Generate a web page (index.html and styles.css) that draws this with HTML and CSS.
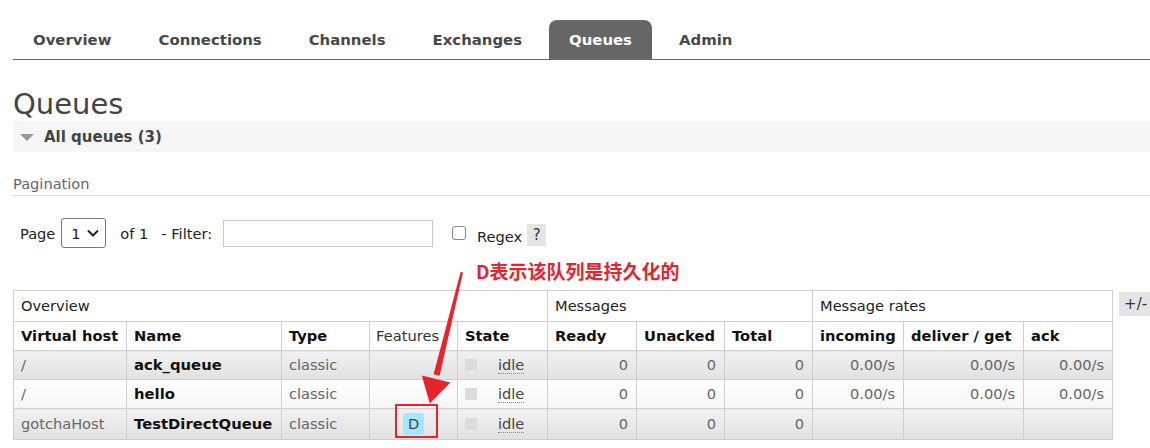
FILE: index.html
```html
<!DOCTYPE html>
<html lang="en">
<head>
<meta charset="utf-8">
<title>RabbitMQ Management - Queues</title>
<link rel="stylesheet" href="styles.css">
</head>
<body>
<div class="page">
  <nav class="menu">
    <a class="tab">Overview</a>
    <a class="tab">Connections</a>
    <a class="tab">Channels</a>
    <a class="tab">Exchanges</a>
    <a class="tab active">Queues</a>
    <a class="tab">Admin</a>
  </nav>

  <h1 class="title">Queues</h1>

  <div class="section-head"><span class="tri"></span><span class="section-label">All queues (3)</span></div>

  <h3 class="sub">Pagination</h3>

  <div class="pager">
    <span>Page</span>
    <span class="select"><span class="select-val">1</span><svg class="chev" width="12" height="8" viewBox="0 0 12 8"><polyline points="1,1.5 6,6.5 11,1.5" fill="none" stroke="#222" stroke-width="2"/></svg></span>
    <span class="of">of 1</span>
    <span class="filter-label">- Filter:</span>
    <span class="input"></span>
    <span class="check"></span>
    <span class="regex">Regex</span>
    <span class="help">?</span>
  </div>

  <div class="table-wrap">
    <table class="list">
      <colgroup>
        <col class="c113"><col class="c155"><col class="c88"><col class="c88"><col class="c90">
        <col class="c89"><col class="c88"><col class="c88">
        <col class="c91"><col class="c120"><col class="c89">
      </colgroup>
      <thead>
        <tr class="group">
          <th colspan="5">Overview</th>
          <th colspan="3">Messages</th>
          <th colspan="3">Message rates</th>
        </tr>
        <tr class="heads">
          <th>Virtual host</th>
          <th>Name</th>
          <th>Type</th>
          <th class="normal">Features</th>
          <th>State</th>
          <th>Ready</th>
          <th>Unacked</th>
          <th>Total</th>
          <th>incoming</th>
          <th>deliver / get</th>
          <th>ack</th>
        </tr>
      </thead>
      <tbody>
        <tr class="alt1">
          <td>/</td>
          <td class="name">ack_queue</td>
          <td>classic</td>
          <td class="feat"></td>
          <td><span class="sq"></span><abbr class="state">idle</abbr></td>
          <td class="num">0</td>
          <td class="num">0</td>
          <td class="num">0</td>
          <td class="num">0.00/s</td>
          <td class="num">0.00/s</td>
          <td class="num">0.00/s</td>
        </tr>
        <tr class="alt2">
          <td>/</td>
          <td class="name">hello</td>
          <td>classic</td>
          <td class="feat"></td>
          <td><span class="sq"></span><abbr class="state">idle</abbr></td>
          <td class="num">0</td>
          <td class="num">0</td>
          <td class="num">0</td>
          <td class="num">0.00/s</td>
          <td class="num">0.00/s</td>
          <td class="num">0.00/s</td>
        </tr>
        <tr class="alt1">
          <td>gotchaHost</td>
          <td class="name">TestDirectQueue</td>
          <td>classic</td>
          <td class="feat"><span class="badge">D</span></td>
          <td><span class="sq"></span><abbr class="state">idle</abbr></td>
          <td class="num">0</td>
          <td class="num">0</td>
          <td class="num">0</td>
          <td></td>
          <td></td>
          <td></td>
        </tr>
      </tbody>
    </table>
    <span class="toggle">+/-</span>
  </div>

  <div class="annot">
    <div class="note">D表示该队列是持久化的</div>
    <svg class="arrow" width="1150" height="448" viewBox="0 0 1150 448">
      <polygon points="460.6,272 463,272.5 439.6,375.8 433.6,374.3" fill="#e8232b"/>
      <polygon points="421.8,375.6 450.4,382.6 429.8,403.5" fill="#e8232b"/>
    </svg>
    <div class="mark"></div>
  </div>
</div>
</body>
</html>
```

FILE: styles.css
```css
* { box-sizing: border-box; }

body {
  margin: 0;
  background: #fff;
  color: #333;
  font-family: "DejaVu Sans", Verdana, sans-serif;
  font-size: 14.6px;
}

.page {
  position: relative;
  padding-left: 13px;
  height: 448px;
  overflow: hidden;
}

/* ---------- top menu ---------- */
.menu {
  display: flex;
  margin-top: 20px;
  height: 40px;
  border-bottom: 1px solid #666;
}
.tab {
  display: block;
  height: 39px;
  line-height: 39px;
  padding: 1px 20px 0;
  margin-right: 7px;
  font-size: 14.9px;
  font-weight: bold;
  color: #484848;
  border-radius: 8px 8px 0 0;
}
.tab.active {
  background: #666;
  color: #fff;
}

/* ---------- headings ---------- */
.title {
  margin: 27px 0 0;
  font-size: 29px;
  line-height: 34px;
  font-weight: normal;
  color: #444;
}

.section-head {
  display: flex;
  align-items: center;
  height: 31px;
  padding-left: 7px;
  background: #f6f6f6;
}
.tri {
  width: 0;
  height: 0;
  border-left: 7.5px solid transparent;
  border-right: 7.5px solid transparent;
  border-top: 7px solid #9a9a9a;
  margin-right: 10px;
  margin-top: 1px;
}
.section-label {
  font-size: 15px;
  font-weight: bold;
  color: #444;
}

.sub {
  margin: 23px 0 0;
  font-size: 14.6px;
  line-height: 18px;
  font-weight: normal;
  color: #666;
  padding-bottom: 2px;
  border-bottom: 1px solid #ddd;
}

/* ---------- pagination ---------- */
.pager {
  display: flex;
  align-items: center;
  height: 30px;
  margin-top: 22px;
  padding-left: 7px;
  color: #222;
}
.select {
  display: flex;
  align-items: center;
  justify-content: space-between;
  width: 45px;
  height: 30px;
  margin-left: 6px;
  padding: 0 6px 0 9px;
  border: 1px solid #767676;
  border-radius: 3px;
  background: #fff;
}
.chev { display: block; }
.of { margin-left: 14px; }
.filter-label { margin-left: 13px; }
.input {
  width: 210px;
  height: 27px;
  margin-left: 11px;
  border: 1px solid #c8c8c8;
  background: #fff;
}
.check {
  width: 14px;
  height: 14px;
  margin-left: 19px;
  border: 1px solid #858585;
  border-radius: 3px;
  background: #fff;
}
.regex {
  margin-left: 11px;
  margin-top: 6px;
}
.help {
  margin-left: 5px;
  margin-top: 4px;
  width: 19px;
  height: 22px;
  line-height: 22px;
  text-align: center;
  background: #e4e4e4;
  color: #333;
  font-size: 15px;
}

/* ---------- table ---------- */
.table-wrap {
  display: flex;
  align-items: flex-start;
  margin-top: 42px;
}
.list {
  width: 1099px;
  table-layout: fixed;
  border-collapse: collapse;
  border: 1px solid #cfcfcf;
  font-size: 14.6px;
}
.c113 { width: 113px; }
.c155 { width: 155px; }
.c88 { width: 88px; }
.c90 { width: 90px; }
.c89 { width: 89px; }
.c91 { width: 91px; }
.c120 { width: 120px; }

.list th,
.list td {
  border: 1px solid #cfcfcf;
  padding: 5px 7px;
  line-height: 18px;
  text-align: left;
  white-space: nowrap;
  overflow: hidden;
}
.list .group th {
  padding-top: 6px;
  padding-bottom: 6px;
  font-weight: normal;
  color: #222;
  background: #fff;
}
.list .heads th {
  font-weight: bold;
  color: #111;
  background: #fff;
  font-size: 14.7px;
}
.list .heads th.normal {
  font-weight: normal;
  color: #333;
  padding-left: 6px;
}
.list td { color: #666; }
.list td.name {
  font-weight: bold;
  color: #111;
  font-size: 14.8px;
}
.list td.num {
  text-align: right;
  padding-right: 8px;
}
.list td.feat {
  text-align: center;
  padding-top: 4px;
  padding-bottom: 4px;
}
.alt1 td { background: linear-gradient(#f1f1f1, #e1e1e1); }
.alt2 td { background: linear-gradient(#ffffff, #f5f5f5); }

.sq {
  display: inline-block;
  width: 12px;
  height: 12px;
  background: #dcdcdc;
  vertical-align: -1px;
  margin-right: 21px;
}
.state {
  text-decoration: none;
  color: #444;
  border-bottom: 1px dotted #888;
}
.badge {
  display: inline-block;
  padding: 0 5px;
  line-height: 22px;
  border-radius: 4px;
  background: #a3e6ff;
  color: #444;
}

.toggle {
  margin-left: 6px;
  margin-top: 2px;
  padding: 0 5px;
  height: 24px;
  line-height: 24px;
  background: #e4e4e4;
  color: #333;
  font-size: 15px;
  white-space: nowrap;
}

/* ---------- annotation overlay ---------- */
.annot {
  position: absolute;
  left: 0;
  top: 0;
  width: 1150px;
  height: 448px;
  pointer-events: none;
}
.note {
  position: absolute;
  left: 476px;
  top: 259px;
  line-height: 24px;
  font-family: "Noto Sans CJK SC", "DejaVu Sans", sans-serif;
  font-size: 19px;
  font-weight: bold;
  color: #e8232b;
  white-space: nowrap;
}
.arrow {
  position: absolute;
  left: 0;
  top: 0;
}
.mark {
  position: absolute;
  left: 395px;
  top: 404px;
  width: 43px;
  height: 34px;
  border: 2px solid #e8232b;
}
```
